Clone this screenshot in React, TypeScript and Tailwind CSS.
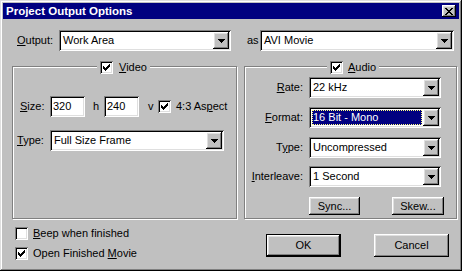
import React from "react";

const raised =
  "shadow-[inset_-1px_-1px_#000,inset_1px_1px_#fff,inset_-2px_-2px_#808080,inset_2px_2px_#dfdfdf]";
const sunken =
  "shadow-[inset_1px_1px_#808080,inset_-1px_-1px_#fff,inset_2px_2px_#000,inset_-2px_-2px_#dfdfdf]";

function Arrow() {
  return (
    <svg width="7" height="4" viewBox="0 0 7 4" shapeRendering="crispEdges">
      <path d="M0 0h7v1H0z M1 1h5v1H1z M2 2h3v1H2z M3 3h1v1H3z" fill="#000" />
    </svg>
  );
}

function Check({ checked }: { checked: boolean }) {
  return (
    <div className={`w-[13px] h-[13px] bg-white flex-shrink-0 flex items-center justify-center ${sunken}`}>
      {checked && (
        <svg width="7" height="7" viewBox="0 0 7 7" shapeRendering="crispEdges">
          <path
            d="M6 0h1v1H6z M5 1h2v1H5z M0 2h1v1H0z M4 2h3v1H4z M0 3h2v1H0z M3 3h3v1H3z M0 4h5v1H0z M1 5h3v1H1z M2 6h1v1H2z"
            fill="#000"
          />
        </svg>
      )}
    </div>
  );
}

function Combo({
  value,
  className,
  selected,
}: {
  value: string;
  className: string;
  selected?: boolean;
}) {
  return (
    <div className={`flex h-[21px] bg-white p-[2px] ${sunken} ${className}`}>
      {selected ? (
        <div className="flex-1 m-[1px] bg-[#000080] text-white flex items-center pl-[1px] outline outline-1 outline-dotted outline-[#ffff80] -outline-offset-1">
          {value}
        </div>
      ) : (
        <div className="flex-1 flex items-center pl-[2px]">{value}</div>
      )}
      <div className={`w-[16px] h-[17px] flex items-center justify-center bg-[#c0c0c0] ${raised}`}>
        <Arrow />
      </div>
    </div>
  );
}

function Field({ value }: { value: string }) {
  return (
    <div className={`w-[35px] h-[21px] bg-white flex items-center pl-[3px] ${sunken}`}>{value}</div>
  );
}

function Button({ label, className }: { label: React.ReactNode; className: string }) {
  return (
    <div className={`flex items-center justify-center bg-[#c0c0c0] ${raised} ${className}`}>
      {label}
    </div>
  );
}

function CheckRow({ checked, children }: { checked: boolean; children: React.ReactNode }) {
  return (
    <div className="flex items-center h-[13px]">
      <Check checked={checked} />
      <span className="ml-[5px]">{children}</span>
    </div>
  );
}

export default function App() {
  return (
    <div className="w-[462px] h-[271px] bg-[#c0c0c0] p-[3px] flex flex-col text-[11px] leading-[13px] text-black font-['Liberation_Sans',Arial,sans-serif] shadow-[inset_-1px_-1px_#000,inset_1px_1px_#dfdfdf,inset_-2px_-2px_#808080,inset_2px_2px_#fff]">
      {/* caption */}
      <div className="h-[16px] bg-[#000080] flex items-center justify-between pl-[3px] pr-[3px]">
        <span className="text-white font-bold text-[11.5px]">Project Output Options</span>
        <div className={`w-[14px] h-[12px] flex items-center justify-center bg-[#c0c0c0] ${raised}`}>
          <svg width="8" height="7" viewBox="0 0 8 7" shapeRendering="crispEdges">
            <path
              d="M0 0h2v1H0z M6 0h2v1H6z M1 1h2v1H1z M5 1h2v1H5z M2 2h4v1H2z M3 3h2v1H3z M2 4h4v1H2z M1 5h2v1H1z M5 5h2v1H5z M0 6h2v1H0z M6 6h2v1H6z"
              fill="#000"
            />
          </svg>
        </div>
      </div>

      {/* output row */}
      <div className="flex items-center mt-[11px] pl-[14px]">
        <span className="w-[42px]">
          <u>O</u>utput:
        </span>
        <Combo value="Work Area" className="w-[172px]" />
        <span className="w-[13px] ml-[16px]">as</span>
        <Combo value="AVI Movie" className="w-[194px]" />
      </div>

      {/* group boxes */}
      <div className="flex mt-[15px] pl-[9px]">
        <div className="relative w-[225px] h-[153px] border border-[#808080] shadow-[inset_1px_1px_#fff,1px_1px_#fff]">
          <div className="absolute left-[84px] -top-[6px] flex items-center bg-[#c0c0c0] px-[3px]">
            <Check checked />
            <span className="ml-[6px]">
              <u>V</u>ideo
            </span>
          </div>
          <div className="flex flex-col pt-[29px]">
            <div className="flex items-center pl-[7px]">
              <span className="w-[30px]">
                <u>S</u>ize:
              </span>
              <Field value="320" />
              <span className="w-[19px] pl-[8px]">h</span>
              <Field value="240" />
              <span className="w-[19px] pl-[9px]">v</span>
              <Check checked />
              <span className="ml-[5px]">
                4:3 As<u>p</u>ect
              </span>
            </div>
            <div className="flex items-center pl-[4px] mt-[13px]">
              <span className="w-[33px]">
                <u>T</u>ype:
              </span>
              <Combo value="Full Size Frame" className="w-[174px]" />
            </div>
          </div>
        </div>

        <div className="relative ml-[7px] w-[213px] h-[153px] border border-[#808080] shadow-[inset_1px_1px_#fff,1px_1px_#fff]">
          <div className="absolute left-[82px] -top-[6px] flex items-center bg-[#c0c0c0] px-[3px]">
            <Check checked />
            <span className="ml-[5px]">
              <u>A</u>udio
            </span>
          </div>
          <div className="flex flex-col pt-[10px]">
            <div className="flex items-center">
              <span className="w-[58px] text-right">
                <u>R</u>ate:
              </span>
              <Combo value="22 kHz" className="w-[132px] ml-[6px]" />
            </div>
            <div className="flex items-center mt-[9px]">
              <span className="w-[58px] text-right">
                <u>F</u>ormat:
              </span>
              <Combo value="16 Bit - Mono" selected className="w-[132px] ml-[6px]" />
            </div>
            <div className="flex items-center mt-[9px]">
              <span className="w-[58px] text-right">
                T<u>y</u>pe:
              </span>
              <Combo value="Uncompressed" className="w-[132px] ml-[6px]" />
            </div>
            <div className="flex items-center mt-[8px]">
              <span className="w-[58px] text-right">
                <u>I</u>nterleave:
              </span>
              <Combo value="1 Second" className="w-[132px] ml-[6px]" />
            </div>
            <div className="flex mt-[10px] pl-[64px]">
              <Button label="Sync..." className="w-[51px] h-[18px]" />
              <Button label="Skew..." className="w-[52px] h-[18px] ml-[32px]" />
            </div>
          </div>
        </div>
      </div>

      {/* bottom */}
      <div className="flex">
        <div className="flex flex-col pl-[12px] pt-[8px] gap-[7px]">
          <CheckRow checked={false}>
            <u>B</u>eep when finished
          </CheckRow>
          <CheckRow checked>
            Open Finished <u>M</u>ovie
          </CheckRow>
        </div>
        <div className="flex ml-auto mr-[10px] mt-[15px]">
          <div className="w-[75px] h-[23px] border border-black">
            <Button label="OK" className="w-full h-full" />
          </div>
          <Button label="Cancel" className="w-[75px] h-[23px] ml-[33px]" />
        </div>
      </div>
    </div>
  );
}
